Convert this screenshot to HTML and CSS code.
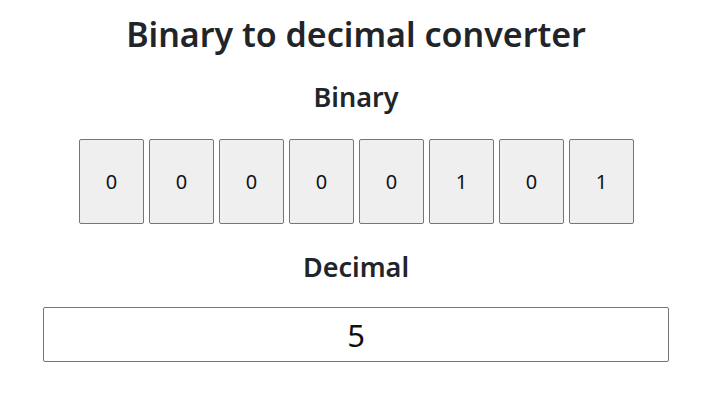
FILE: index.html
```html
<!DOCTYPE html>
<html>
<head>
<meta charset="utf-8">
<link rel="stylesheet" href="styles.css">
</head>
<body>
<main class="app">
  <h1 class="title">Binary to decimal converter</h1>
  <h2 class="label">Binary</h2>
  <div class="bits">
    <button class="bit">0</button>
    <button class="bit">0</button>
    <button class="bit">0</button>
    <button class="bit">0</button>
    <button class="bit">0</button>
    <button class="bit">1</button>
    <button class="bit">0</button>
    <button class="bit">1</button>
  </div>
  <h2 class="label label-dec">Decimal</h2>
  <input class="decimal" type="text" value="5" readonly>
</main>
</body>
</html>
```

FILE: styles.css
```css
html, body {
  margin: 0;
  padding: 0;
  background: #ffffff;
}
body {
  font-family: "Noto Sans", "Open Sans", sans-serif;
  color: #212529;
}
.app {
  display: flex;
  flex-direction: column;
  align-items: center;
  padding: 12px 0 0 0;
}
.title {
  margin: 0;
  font-size: 34px;
  font-weight: 600;
  line-height: 44px;
}
.label {
  margin: 24px 0 0 0;
  font-size: 27px;
  font-weight: 600;
  line-height: 34px;
}
.bits {
  display: flex;
  gap: 5px;
  margin-top: 25px;
  padding-left: 1px;
}
.bit {
  width: 65px;
  height: 85px;
  background: #efefef;
  border: 1px solid #767676;
  border-radius: 2px;
  font-family: "Noto Sans", sans-serif;
  font-size: 20px;
  color: #111;
  padding: 0;
}
.label-dec {
  margin-top: 26px;
}
.decimal {
  margin-top: 23px;
  box-sizing: border-box;
  width: 626px;
  height: 55px;
  border: 1px solid #767676;
  border-radius: 2px;
  text-align: center;
  font-family: "Noto Sans", sans-serif;
  font-size: 31px;
  color: #111;
  padding: 0;
  outline: none;
}
```
